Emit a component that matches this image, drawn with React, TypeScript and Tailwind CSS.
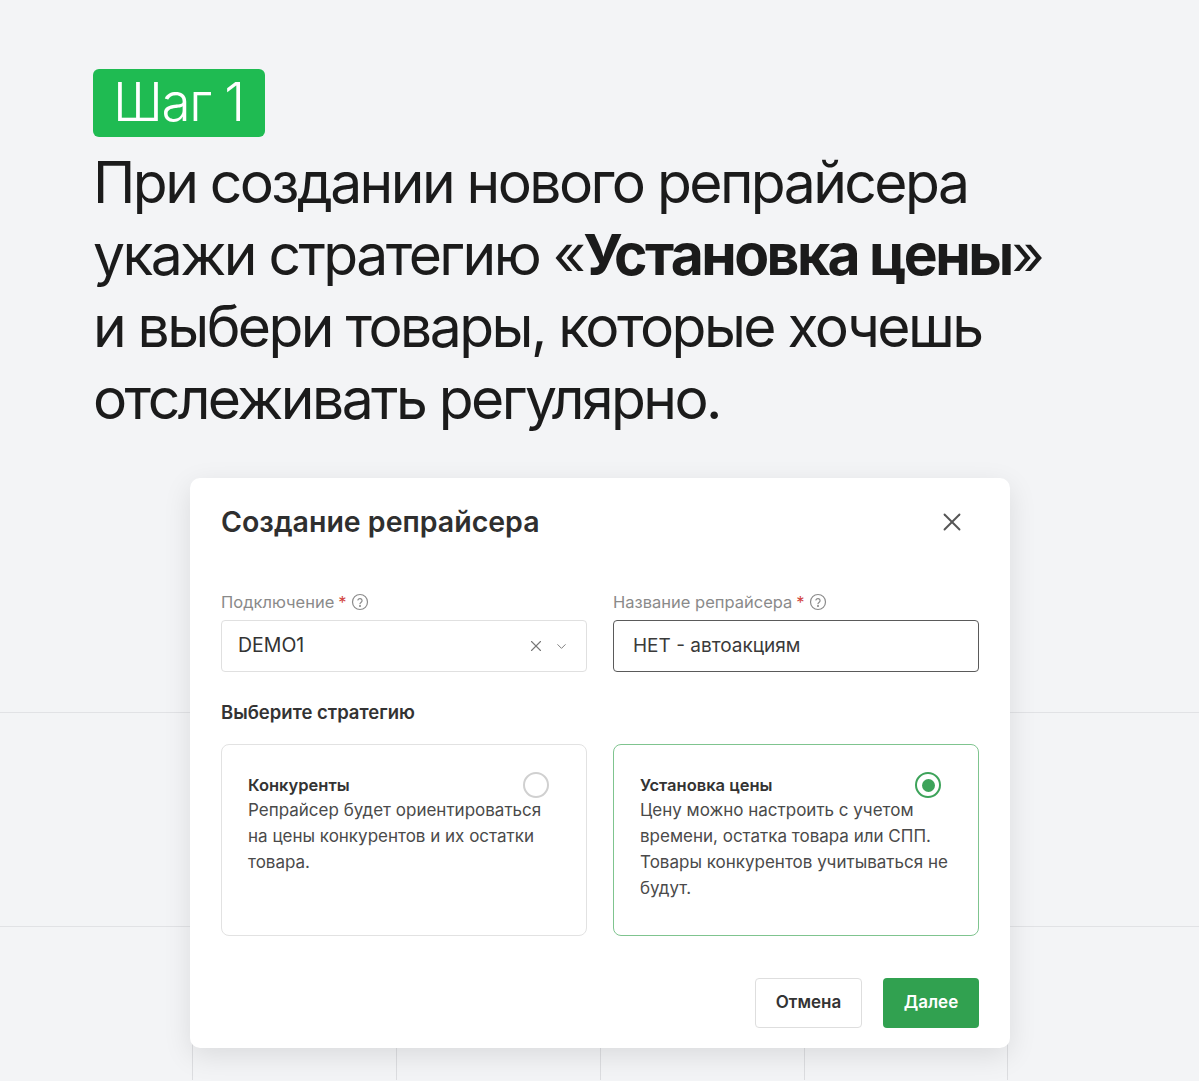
import { ChevronDown, X } from "lucide-react";

function HelpIcon() {
  return (
    <svg width="18" height="18" viewBox="0 0 24 24" fill="none" stroke="#8c8c8c" strokeWidth="1.6" strokeLinecap="round" strokeLinejoin="round">
      <circle cx="12" cy="12" r="10" />
      <path d="M9.2 9.3a2.9 2.9 0 0 1 5.6 1c0 1.9-2.8 2.5-2.8 4" />
      <circle cx="12" cy="17.4" r="0.6" fill="#8c8c8c" />
    </svg>
  );
}

function FieldLabel({ text }: { text: string }) {
  return (
    <div className="flex h-5 items-center gap-1 text-[16.5px] text-[#8a8a8a]">
      <span>{text}</span>
      <span className="text-[#d2463f]">*</span>
      <HelpIcon />
    </div>
  );
}

type StrategyCardProps = {
  title: string;
  text: string;
  selected?: boolean;
};

function StrategyCard({ title, text, selected }: StrategyCardProps) {
  return (
    <div
      className={
        selected
          ? "h-[192px] rounded-lg border border-[#7fc48f] bg-white px-[26px] pt-[28px]"
          : "h-[192px] rounded-lg border border-[#e2e2e2] bg-white px-[26px] pt-[28px]"
      }
    >
      <div className="flex h-6 items-center justify-between">
        <span className="text-[16.5px] font-semibold text-[#333]">{title}</span>
        {selected ? (
          <span className="mr-[11px] flex h-[26px] w-[26px] items-center justify-center rounded-full border-[2.5px] border-[#3da35a]">
            <span className="h-[13px] w-[13px] rounded-full bg-[#3da35a]" />
          </span>
        ) : (
          <span className="mr-[11px] h-[26px] w-[26px] rounded-full border-2 border-[#d0d0d0]" />
        )}
      </div>
      <p className="pr-[3px] text-[17px] leading-[26px] text-[#4a4a4a]">{text}</p>
    </div>
  );
}

function Backdrop() {
  return (
    <div className="col-start-1 row-start-1">
      <div className="h-[713px] border-b border-[#e1e2e5]" />
      <div className="h-[214px] border-b border-[#e1e2e5]" />
      <div className="flex h-[153px] pl-[192px]">
        <div className="w-[204px] border-l border-[#dcdde0]" />
        <div className="w-[204px] border-l border-[#dcdde0]" />
        <div className="w-[204px] border-l border-[#dcdde0]" />
        <div className="w-[204px] border-x border-[#dcdde0]" />
      </div>
    </div>
  );
}

function RepricerModal() {
  return (
    <div className="ml-[190px] h-[570px] w-[820px] rounded-[10px] bg-white px-[31px] pt-[28px] font-['Inter',sans-serif] shadow-[0_8px_28px_rgba(0,0,0,0.10)]">
      <div className="flex h-8 items-center justify-between">
        <h2 className="text-[28.5px] font-semibold text-[#2f2f2f]">Создание репрайсера</h2>
        <X className="mr-[12px]" size={30} strokeWidth={1.5} color="#555" />
      </div>

      <div className="mt-[54px] grid grid-cols-2 gap-x-[26px]">
        <div>
          <FieldLabel text="Подключение" />
          <div className="mt-2 flex h-[52px] items-center justify-between rounded border border-[#e0e0e0] pl-4 pr-[17px]">
            <span className="text-[19.5px] text-[#333]">DEMO1</span>
            <div className="flex items-center gap-[9px] text-[#777]">
              <X size={18} strokeWidth={1.5} />
              <ChevronDown size={15} strokeWidth={1.5} />
            </div>
          </div>
        </div>
        <div>
          <FieldLabel text="Название репрайсера" />
          <div className="mt-2 flex h-[52px] items-center rounded border border-[#5a5a5a] pl-[19px]">
            <span className="text-[19px] text-[#3a3a3a]">НЕТ - автоакциям</span>
          </div>
        </div>
      </div>

      <div className="mt-[29px] text-[18.5px] font-semibold leading-[22px] text-[#333]">Выберите стратегию</div>

      <div className="mt-[21px] grid grid-cols-2 gap-x-[26px]">
        <StrategyCard
          title="Конкуренты"
          text="Репрайсер будет ориентироваться на цены конкурентов и их остатки товара."
        />
        <StrategyCard
          selected
          title="Установка цены"
          text="Цену можно настроить с учетом времени, остатка товара или СПП. Товары конкурентов учитываться не будут."
        />
      </div>

      <div className="mt-[42px] flex justify-end gap-[21px]">
        <button type="button" className="h-[50px] w-[107px] rounded border border-[#dedede] bg-white text-[17px] font-semibold text-[#333]">
          Отмена
        </button>
        <button type="button" className="h-[50px] w-[96px] rounded bg-[#31a150] text-[17px] font-semibold text-white">
          Далее
        </button>
      </div>
    </div>
  );
}

export default function App() {
  return (
    <div className="grid h-[1081px] w-full overflow-hidden bg-[#f3f4f6]">
      <Backdrop />
      <div className="col-start-1 row-start-1 pt-[69px] font-['Inter',sans-serif]">
        <div className="ml-[93px] inline-flex h-[68px] items-center rounded-md bg-[#1fbb52] pl-[20px] pr-[21px] text-[53px] font-light tracking-tight text-white">
          Шаг 1
        </div>
        <h1 className="ml-[93px] mt-[10px] text-[57px] font-normal leading-[72px] tracking-[-0.045em] text-[#1b1b1b]">
          При создании нового репрайсера
          <br />
          укажи стратегию «<span className="font-bold">Установка цены</span>»
          <br />
          и выбери товары, которые хочешь
          <br />
          отслеживать регулярно.
        </h1>
        <div className="mt-[43px]">
          <RepricerModal />
        </div>
      </div>
    </div>
  );
}
